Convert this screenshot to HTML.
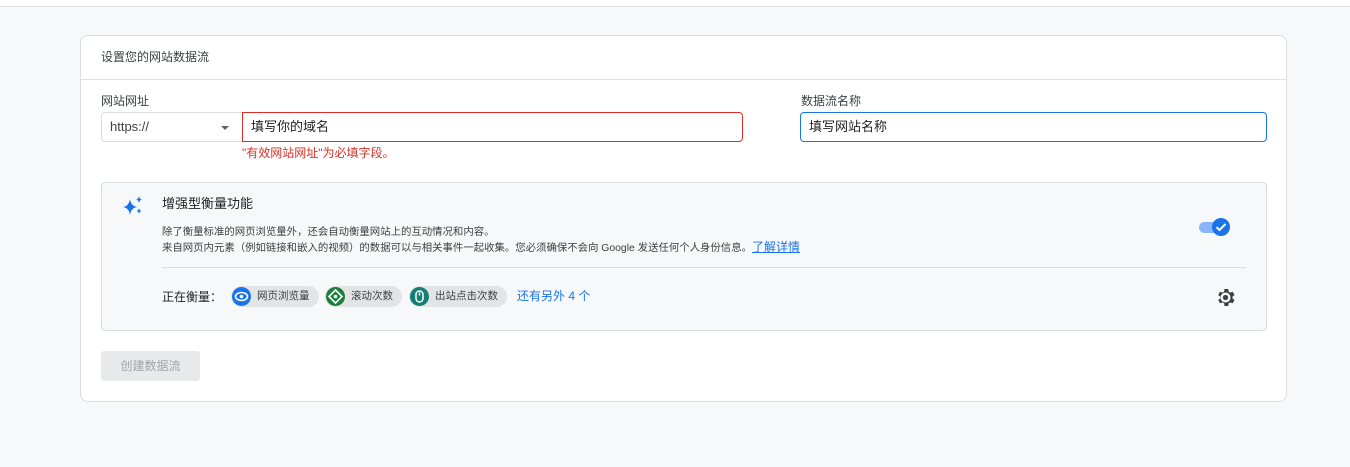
<!DOCTYPE html>
<html><head><meta charset="utf-8"><style>
*{box-sizing:border-box;margin:0;padding:0}
body{width:1350px;height:467px;background:#f7f8fa;font-family:"Liberation Sans","Noto Sans CJK SC",sans-serif;color:#202124;position:relative;overflow:hidden}
.top{position:absolute;left:0;top:0;width:1350px;height:7px;background:#fff;border-bottom:1px solid #dadce0}
.card{position:absolute;left:80px;top:35px;width:1207px;height:367px;background:#fff;border:1px solid #dadce0;border-radius:8px}
.abs{position:absolute}
.t12{font-size:12px}
.t13{font-size:13px}
.box{position:absolute;height:30px;border-radius:4px;font-size:13px;line-height:28px;padding-left:8px}
.chip{position:absolute;top:250px;height:21px;border-radius:11px;background:#e3e4e6;font-size:10.5px;line-height:21px;padding-left:26px;padding-right:9px;color:#3c4043}
.chip i{position:absolute;left:1px;top:1px;width:19px;height:19px;border-radius:50%}
</style></head><body>
<div class="top"></div>
<div class="card">
  <div class="abs t12" style="left:20px;top:12px;color:#3c4043">设置您的网站数据流</div>
  <div class="abs" style="left:0;top:43px;width:1205px;height:1px;background:#e0e0e0"></div>
  <div class="abs t12" style="left:20px;top:56px;color:#3c4043">网站网址</div>
  <div class="box" style="left:20px;top:76px;width:145px;border:1px solid #dadce0;border-right:none;border-radius:4px 0 0 4px;color:#3c4043">https://</div>
  <div class="abs" style="left:140px;top:90px;width:0;height:0;border-left:4px solid transparent;border-right:4px solid transparent;border-top:4px solid #5f6368"></div>
  <div class="box" style="left:161px;top:76px;width:501px;border:1px solid #d93025;border-radius:0 4px 4px 0">填写你的域名</div>
  <div class="abs t12" style="left:161px;top:108px;color:#d93025">"有效网站网址"为必填字段。</div>
  <div class="abs t12" style="left:720px;top:56px;color:#3c4043">数据流名称</div>
  <div class="box" style="left:719px;top:76px;width:467px;border:1px solid #1a73e8">填写网站名称</div>

  <div class="abs" style="left:20px;top:146px;width:1166px;height:149px;background:#f7f8fa;border:1px solid #dadce0;border-radius:4px">
    <svg class="abs" style="left:20px;top:12px" width="22" height="22" viewBox="0 0 22 22"><path d="M8 4 Q9 11 15 12 Q9 13 8 20 Q7 13 1 12 Q7 11 8 4Z" fill="#1a73e8"/><path d="M17 1 Q17.5 4 20 4.5 Q17.5 5 17 8 Q16.5 5 14 4.5 Q16.5 4 17 1Z" fill="#1a73e8"/><path d="M17 13 Q17.4 15.5 19.5 16 Q17.4 16.5 17 19 Q16.6 16.5 14.5 16 Q16.6 15.5 17 13Z" fill="#1a73e8"/></svg>
    <div class="abs t13" style="left:60px;top:10px">增强型衡量功能</div>
    <div class="abs" style="left:60px;top:42px;font-size:10.4px;line-height:15px;color:#3c4043">除了衡量标准的网页浏览量外，还会自动衡量网站上的互动情况和内容。<br>来自网页内元素（例如链接和嵌入的视频）的数据可以与相关事件一起收集。您必须确保不会向 Google 发送任何个人身份信息。<span style="color:#1a73e8;text-decoration:underline;font-size:12px">了解详情</span></div>
    <div class="abs" style="left:1097px;top:39px;width:24px;height:11px;border-radius:6px;background:#8ab4f8"></div>
    <div class="abs" style="left:1110px;top:35px;width:18px;height:18px;border-radius:50%;background:#1a73e8"><svg width="18" height="18" viewBox="0 0 18 18"><path d="M4.5 9.2 L7.5 12 L13.5 6" stroke="#fff" stroke-width="2" fill="none"/></svg></div>
    <div class="abs" style="left:60px;top:84px;width:1084px;height:1px;background:#dadce0"></div>
    <div class="abs t12" style="left:60px;top:105px">正在衡量：</div>
    <svg class="abs" style="left:1114px;top:105px" width="19" height="19" viewBox="2 2 20 20"><path fill="#3c4043" fill-rule="evenodd" d="M19.4 13a7.6 7.6 0 0 0 0-2l2.1-1.6-2-3.5-2.5 1a7 7 0 0 0-1.7-1L14.9 3h-4l-.4 2.9a7 7 0 0 0-1.7 1l-2.5-1-2 3.5L6.4 11a7.6 7.6 0 0 0 0 2l-2.1 1.6 2 3.5 2.5-1a7 7 0 0 0 1.7 1l.4 2.9h4l.4-2.9a7 7 0 0 0 1.7-1l2.5 1 2-3.5zM12 17.3a5.3 5.3 0 1 1 0-10.6 5.3 5.3 0 0 1 0 10.6z"/><circle cx="12" cy="12" r="2.8" fill="#3c4043"/></svg>
  </div>
  <div class="chip" style="left:150px"><i style="background:#1a73e8"><svg width="19" height="19" viewBox="0 0 19 19"><ellipse cx="9.5" cy="9.5" rx="6" ry="4" fill="none" stroke="#fff" stroke-width="1.6"/><circle cx="9.5" cy="9.5" r="1.8" fill="#fff"/></svg></i>网页浏览量</div>
  <div class="chip" style="left:244px"><i style="background:#188038"><svg width="19" height="19" viewBox="0 0 19 19"><path d="M9.5 3 L16 9.5 L9.5 16 L3 9.5Z" fill="none" stroke="#fff" stroke-width="1.6"/><circle cx="9.5" cy="9.5" r="1.8" fill="#fff"/></svg></i>滚动次数</div>
  <div class="chip" style="left:328px"><i style="background:#137e74"><svg width="19" height="19" viewBox="0 0 19 19"><rect x="6" y="4" width="7" height="11" rx="3.5" fill="none" stroke="#fff" stroke-width="1.5"/><path d="M9.5 5.5v3" stroke="#fff" stroke-width="1.5"/></svg></i>出站点击次数</div>
  <div class="abs t12" style="left:436px;top:251px;color:#1a73e8">还有另外 4 个</div>
  <div class="abs" style="left:20px;top:315px;width:99px;height:30px;border-radius:3px;background:#e8e9ea;color:#a0a3a6;font-size:12px;line-height:30px;text-align:center">创建数据流</div>
</div>
</body></html>
